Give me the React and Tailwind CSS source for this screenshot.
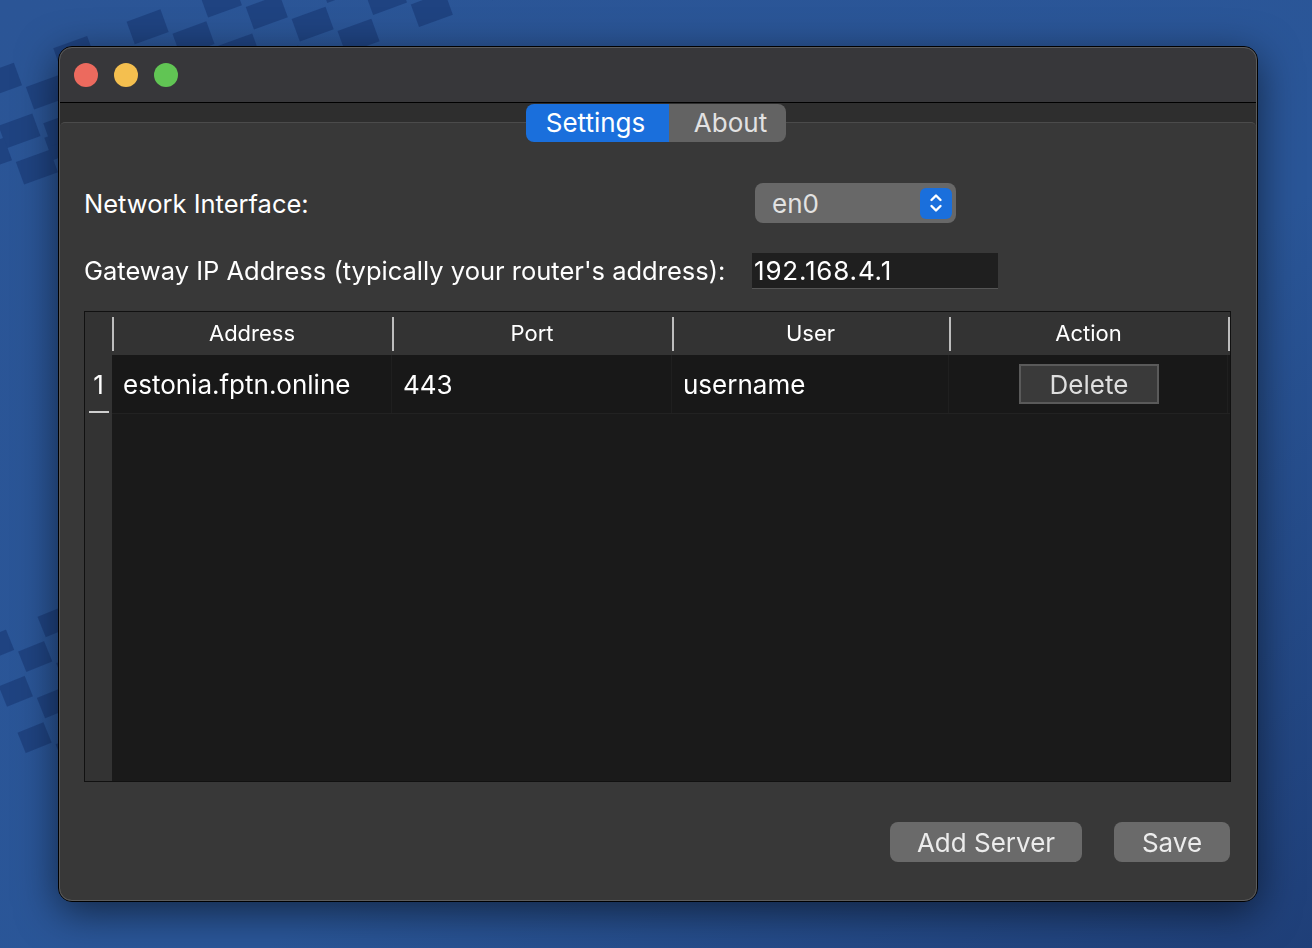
const font = { fontFamily: "Inter, 'Liberation Sans', sans-serif" };

const columns = [
  { label: "Address", width: "w-[280px]" },
  { label: "Port", width: "w-[280px]" },
  { label: "User", width: "w-[277px]" },
  { label: "Action", width: "w-[279px]" },
];

// checker band: alternating dark tiles on a rotated grid
const Band = ({ x, y, angle, cols, rows, w, h, gap }) => (
  <g transform={`translate(${x} ${y}) rotate(${angle})`}>
    {Array.from({ length: rows }).map((_, r) =>
      Array.from({ length: cols }).map((_, c) =>
        (r + c) % 2 === 0 ? (
          <rect key={r + "-" + c} x={c * (w + gap)} y={r * (h + gap)} width={w} height={h} />
        ) : null
      )
    )}
  </g>
);

const Wallpaper = () => (
  <svg className="absolute inset-0" width="1312" height="948" viewBox="0 0 1312 948">
    <defs>
      <linearGradient id="bg" x1="0" y1="0" x2="1" y2="1">
        <stop offset="0" stopColor="#2b5596" />
        <stop offset="0.6" stopColor="#2a5698" />
        <stop offset="1" stopColor="#1f3f78" />
      </linearGradient>
    </defs>
    <rect width="1312" height="948" fill="url(#bg)" />
    <g fill="#1d3f7c" opacity="0.8">
      <Band x={-20} y={75} angle={-20} cols={16} rows={4} w={36} h={24} gap={3} />
      <Band x={-30} y={150} angle={-20} cols={4} rows={2} w={36} h={24} gap={3} />
      <Band x={-20} y={640} angle={-22} cols={3} rows={6} w={28} h={22} gap={3} />
    </g>
  </svg>
);

const Stepper = () => (
  <span className="w-[32px] h-[31px] rounded-[6px] bg-[#1a6fdc] flex items-center justify-center">
    <svg width="14" height="22" viewBox="0 0 14 22" fill="none" stroke="white" strokeWidth="2.4" strokeLinecap="round" strokeLinejoin="round">
      <path d="M2.5 8 L7 3.5 L11.5 8" />
      <path d="M2.5 14 L7 18.5 L11.5 14" />
    </svg>
  </span>
);

export default function App() {
  return (
    <div className="relative w-[1312px] h-[948px] overflow-hidden" style={font}>
      <Wallpaper />

      {/* Window */}
      <div className="relative ml-[58px] mt-[46px] w-[1200px] h-[856px] rounded-[14px] border border-black bg-[#383838] shadow-[0_10px_40px_rgba(0,0,0,0.55)] flex flex-col overflow-hidden">
        <div className="absolute inset-0 rounded-[13px] border border-[#5c5c5c] pointer-events-none" />

        {/* Title bar */}
        <div className="h-[56px] bg-[#37373a] border-b border-black flex items-center gap-4 pl-[15px] shrink-0">
          <span className="w-6 h-6 rounded-full bg-[#ec6a5e]" />
          <span className="w-6 h-6 rounded-full bg-[#f4bf4f]" />
          <span className="w-6 h-6 rounded-full bg-[#61c554]" />
        </div>

        {/* Body */}
        <div className="flex-1 flex flex-col bg-[#2e2e2e] pt-[1px] px-[1px]">
          {/* Tabs */}
          <div className="relative z-10 flex justify-center pr-[4px]">
            <div className="flex h-[38px] rounded-[8px] overflow-hidden text-[26px] leading-none">
              <div className="w-[143px] bg-[#1a6fdc] text-white flex items-center justify-center pr-[4px]">
                Settings
              </div>
              <div className="w-[117px] bg-[#636363] text-[#e2e2e2] flex items-center justify-center pl-[6px]">
                About
              </div>
            </div>
          </div>

          {/* Pane */}
          <div className="-mt-[20px] flex-1 rounded-t-[5px] border-t border-[#4b4b4b] bg-[#383838] pt-[60px] pl-[25px] pr-[25px] flex flex-col text-white">
            {/* Network interface */}
            <div className="flex items-center h-[40px]">
              <div className="w-[671px] text-[25.5px] -ml-[1px] mt-[2px]">Network Interface:</div>
              <div className="w-[201px] h-[40px] rounded-[8px] bg-[#686868] flex items-center justify-between pl-[17px] pr-[4px]">
                <span className="text-[26px] text-[#e2e2e2]">en0</span>
                <Stepper />
              </div>
            </div>

            {/* Gateway */}
            <div className="flex items-center h-[36px] mt-[30px]">
              <div className="w-[668px] text-[25.5px] -ml-[1px]">Gateway IP Address (typically your router's address):</div>
              <div className="w-[246px] h-[36px] bg-[#1f1f1f] border-b border-[#555] flex items-center pl-[2px] text-[26px] tracking-[0.8px]">
                192.168.4.1
              </div>
            </div>

            {/* Table */}
            <div className="mt-[22px] -ml-[1px] w-[1147px] h-[471px] border border-[#111] bg-[#1a1a1a] flex">
              {/* Vertical header */}
              <div className="w-[27px] bg-[#333333] flex flex-col shrink-0">
                <div className="h-[43px]" />
                <div className="h-[58px] flex flex-col items-center justify-center relative">
                  <span className="text-[26px] leading-none mt-[2px]">1</span>
                  <span className="absolute bottom-0 left-[4px] w-[20px] h-[2px] bg-[#cfcfcf]" />
                </div>
              </div>

              <div className="flex-1 flex flex-col">
                {/* Header */}
                <div className="h-[43px] bg-[#333333] flex">
                  {columns.map((c) => (
                    <div key={c.label} className={`${c.width} h-full relative flex items-center justify-center text-[22px] text-white`}>
                      <span className="absolute left-0 top-[5px] h-[34px] w-[2px] bg-[#bdbdbd]" />
                      {c.label}
                    </div>
                  ))}
                  <span className="mt-[5px] h-[34px] w-[2px] bg-[#bdbdbd]" />
                </div>

                {/* Row */}
                <div className="h-[59px] flex bg-[#181818] border-b border-[#222] text-[26px]">
                  <div className="w-[280px] border-r border-[#1f1f1f] flex items-center pl-[11px]">estonia.fptn.online</div>
                  <div className="w-[280px] border-r border-[#1f1f1f] flex items-center pl-[11px]">443</div>
                  <div className="w-[277px] border-r border-[#1f1f1f] flex items-center pl-[11px]">username</div>
                  <div className="w-[279px] border-r border-[#1f1f1f] flex items-center justify-center pl-[2px]">
                    <div className="w-[140px] h-[40px] bg-[#3a3a3a] border-2 border-[#5a5a5a] flex items-center justify-center text-[26px] text-[#dedede]">
                      Delete
                    </div>
                  </div>
                </div>
              </div>
            </div>

            {/* Buttons */}
            <div className="mt-[40px] flex justify-end gap-[32px] pr-[1px]">
              <div className="w-[192px] h-[40px] rounded-[8px] bg-[#6a6a6a] flex items-center justify-center text-[26px] text-[#ececec]">
                Add Server
              </div>
              <div className="w-[116px] h-[40px] rounded-[8px] bg-[#6a6a6a] flex items-center justify-center text-[26px] text-[#ececec]">
                Save
              </div>
            </div>
          </div>
        </div>
      </div>
    </div>
  );
}
